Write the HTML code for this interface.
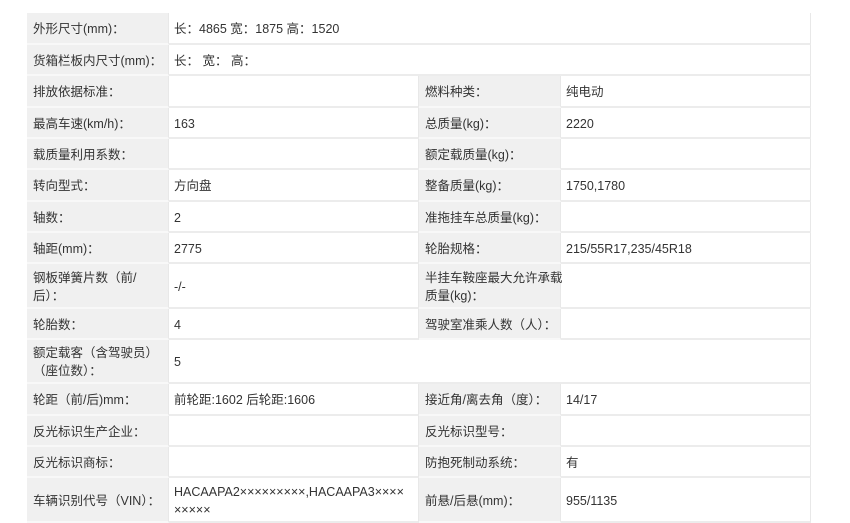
<!DOCTYPE html>
<html><head><meta charset="utf-8"><style>
body{margin:0;width:850px;height:523px;background:#fff;position:relative;overflow:hidden;font-family:"Liberation Sans","Noto Sans CJK SC",sans-serif;font-size:12.5px;color:#333}
.c{position:absolute;box-sizing:border-box;border-right:1px solid #e8e8e8;border-bottom:2px solid #ececec;display:flex;align-items:center;padding:2px 5px 0 5px;line-height:18px;white-space:nowrap}
.l{background:#f0f0f0;padding-left:6px;border-bottom-color:#f8f8f8}
</style></head><body>
<div id="t"></div>
<script>
var rows=[
[13,45,["外形尺寸(mm)：","长：4865 宽：1875 高：1520"]],
[45,76,["货箱栏板内尺寸(mm)：","长：  宽：  高："]],
[76,108,["排放依据标准：","","燃料种类：","纯电动"]],
[108,139,["最高车速(km/h)：","163","总质量(kg)：","2220"]],
[139,170,["载质量利用系数：","","额定载质量(kg)：",""]],
[170,202,["转向型式：","方向盘","整备质量(kg)：","1750,1780"]],
[202,233,["轴数：","2","准拖挂车总质量(kg)：",""]],
[233,264,["轴距(mm)：","2775","轮胎规格：","215/55R17,235/45R18"]],
[264,309,["钢板弹簧片数（前/<br>后）：","-/-","半挂车鞍座最大允许承载<br>质量(kg)：",""]],
[309,340,["轮胎数：","4","驾驶室准乘人数（人）：",""]],
[340,384,["额定载客（含驾驶员）<br>（座位数）：","5"]],
[384,416,["轮距（前/后)mm：","前轮距:1602 后轮距:1606","接近角/离去角（度）：","14/17"]],
[416,447,["反光标识生产企业：","","反光标识型号：",""]],
[447,478,["反光标识商标：","","防抱死制动系统：","有"]],
[478,523,["车辆识别代号（VIN）：","HACAAPA2×××××××××,HACAAPA3××××<br>×××××","前悬/后悬(mm)：","955/1135"]]];
var xs=[27,169,419,561,811],h="";
rows.forEach(function(r){var y=r[0],hh=r[1]-r[0],c=r[2];
if(c.length==2){h+=cell(27,169,y,hh,c[0],1)+cell(169,811,y,hh,c[1],0);}
else for(var i=0;i<4;i++)h+=cell(xs[i],xs[i+1],y,hh,c[i],i%2==0);});
function cell(a,b,y,hh,t,l){return '<div class="c'+(l?' l':'')+'" style="left:'+a+'px;top:'+y+'px;width:'+(b-a)+'px;height:'+hh+'px">'+(t?'<span>'+t+'</span>':'')+'</div>';}
document.getElementById('t').innerHTML=h;
</script>
</body></html>
